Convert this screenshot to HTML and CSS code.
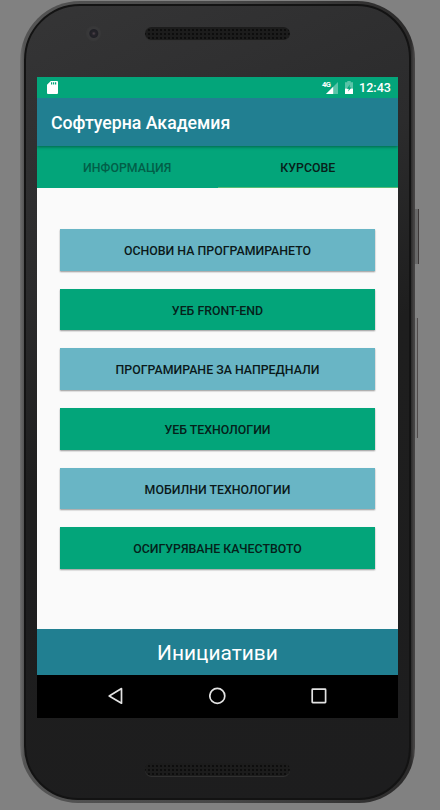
FILE: index.html
```html
<!DOCTYPE html>
<html lang="bg">
<head>
<meta charset="utf-8">
<title>Софтуерна Академия</title>
<link rel="stylesheet" href="styles.css">
</head>
<body>
<div class="device">
  <span class="side-key power"></span>
  <span class="side-key volume"></span>
  <div class="face">
    <div class="bezel-top">
      <span class="camera"></span>
      <span class="speaker"></span>
    </div>
    <main class="screen">
      <div class="status">
        <svg class="sd" width="11" height="13" viewBox="0 0 11 13"><path fill="#fff" fill-rule="evenodd" d="M3.8 0H10a1 1 0 0 1 1 1v11a1 1 0 0 1-1 1H1a1 1 0 0 1-1-1V3.8ZM4 1.3v2.2h1.2V1.3Zm2 0v2.2h1.2V1.3Zm2 0v2.2h1.2V1.3Z"/></svg>
        <div class="status-right">
          <span class="network">
            <svg width="12" height="12" viewBox="0 0 12 12"><path fill="#fff" fill-opacity=".35" d="M12 0v12H0Z"/><path fill="#fff" d="M7.2 4.8V12H0Z"/></svg>
            <span class="network-label">4G</span>
          </span>
          <svg class="battery" width="8" height="13" viewBox="0 0 8 13"><path fill="#fff" fill-opacity=".35" d="M2.3 0h3.4v1.3H8V7.5H0V1.3h2.3Z"/><path fill="#fff" d="M0 7.5h8V13H0Z"/><path fill="#03a57a" d="M5 3.4 1.8 7.8h2L3.2 10.6l3.2-4.2h-2Z"/></svg>
          <span class="clock">12:43</span>
        </div>
      </div>
      <header class="appbar"><h1>Софтуерна Академия</h1></header>
      <nav class="tabs">
        <div class="tab">ИНФОРМАЦИЯ</div>
        <div class="tab active">КУРСОВЕ</div>
      </nav>
      <section class="courses">
        <div class="course blue">ОСНОВИ НА ПРОГРАМИРАНЕТО</div>
        <div class="course green">УЕБ FRONT-END</div>
        <div class="course blue">ПРОГРАМИРАНЕ ЗА НАПРЕДНАЛИ</div>
        <div class="course green">УЕБ ТЕХНОЛОГИИ</div>
        <div class="course blue">МОБИЛНИ ТЕХНОЛОГИИ</div>
        <div class="course green">ОСИГУРЯВАНЕ КАЧЕСТВОТО</div>
      </section>
      <footer class="initiatives">Инициативи</footer>
      <div class="navbar">
        <svg width="18" height="18" viewBox="0 0 18 18"><path d="M14.5 1.6v14.6L2.2 8.9Z"/></svg>
        <svg width="18" height="18" viewBox="0 0 18 18"><circle cx="8.3" cy="8.9" r="7.5"/></svg>
        <svg width="18" height="18" viewBox="0 0 18 18"><rect x="2.2" y="2.2" width="13.4" height="13.4" rx=".5"/></svg>
      </div>
    </main>
    <div class="bezel-bottom"><span class="speaker"></span></div>
  </div>
</div>
</body>
</html>
```
FILE: styles.css
```css
* { box-sizing: border-box; }
body {
  margin: 0;
  width: 440px;
  height: 810px;
  overflow: hidden;
  background: #818181;
  font-family: Roboto, "Noto Sans", sans-serif;
  color: #fff;
}
.device {
  position: relative;
  width: 395px;
  height: 802px;
  margin: 1px 0 0 20px;
  padding: 3px 4px;
  border-radius: 60px 58px 56px 58px;
  background: linear-gradient(90deg, #707070 0, #545454 4px, #484848 50%, #2b2a2a 391px, #464444 394px);
}
.face {
  height: 796px;
  padding: 0 11px;
  border: 2px solid #131313;
  border-radius: 56px 54px 52px 54px;
  background: linear-gradient(155deg, #353536 0, #2b2b2c 30%, #1e1e1e 50%, #1d1d1e 100%);
}
.bezel-top {
  display: flex;
  height: 71px;
  padding: 20px 0 0 49px;
}
.camera {
  width: 15px;
  height: 15px;
  border-radius: 50%;
  background: radial-gradient(circle at 52% 50%, #51444c 0, #242329 2px, #202026 4px, #39393a 5px, #373738 7px);
}
.speaker {
  width: 145px;
  height: 13px;
  border-radius: 7px;
  background: radial-gradient(circle, #080808 0, #0b0b0b .6px, transparent 1.3px) 2px 1px / 4px 4px, #1c1c1c;
  box-shadow: 0 1px 0 #303030;
}
.bezel-top .speaker { margin: 1px 0 0 44px; }
.screen {
  width: 361px;
  height: 641px;
  background: #fafafa;
}
.status {
  display: flex;
  align-items: center;
  justify-content: space-between;
  height: 21px;
  padding: 0 7px 0 10px;
  background: #03a57a;
}
.status-right { display: flex; align-items: center; }
.network { position: relative; height: 12px; margin-right: 7px; }
.network svg { display: block; }
.network-label {
  position: absolute;
  left: -4px;
  top: -1px;
  font-size: 7.5px;
  line-height: 7px;
  font-weight: 700;
  letter-spacing: -.6px;
  background: #03a57a;
}
.battery { margin-right: 6px; }
.clock { font-size: 12.6px; font-weight: 500; line-height: 21px; }
.appbar {
  position: relative;
  display: flex;
  align-items: center;
  height: 48px;
  padding: 2px 0 0 14px;
  background: #217f91;
  box-shadow: 0 1px 3px rgba(0, 0, 0, .4);
  clip-path: inset(0 0 -5px 0);
}
h1 { margin: 0; font-size: 17.7px; font-weight: 500; white-space: nowrap; }
.tabs {
  display: flex;
  height: 42px;
  background: #03a57a;
  font-size: 12.35px;
  font-weight: 500;
}
.tab {
  flex: 1;
  padding-top: 1px;
  line-height: 43px;
  text-align: center;
  color: #025e48;
}
.tab.active { color: #082019; border-bottom: 1px solid #58bd75; }
.courses {
  display: flex;
  flex-direction: column;
  gap: 18.1px;
  height: 441px;
  padding: 41px 23px 0;
}
.course {
  height: 41.6px;
  line-height: 44px;
  text-align: center;
  font-size: 12.35px;
  font-weight: 500;
  color: #0b191a;
  white-space: nowrap;
  box-shadow: 0 1px 1.5px rgba(0, 0, 0, .4);
}
.blue { background: #69b5c5; }
.green { background: #03a57a; color: #05211a; }
.initiatives {
  height: 46px;
  line-height: 48px;
  text-align: center;
  font-size: 20.9px;
  background: #217f91;
}
.navbar {
  display: flex;
  align-items: center;
  justify-content: space-between;
  height: 43px;
  padding: 0 70px 2px;
  background: #000;
}
.navbar svg { fill: none; stroke: #e2e2e2; stroke-width: 1.7; stroke-linejoin: round; }
.bezel-bottom { display: flex; justify-content: center; padding-top: 45px; }
.side-key { position: absolute; }
.power { left: 395px; top: 208px; width: 4px; height: 55px; background: #686868; border-right: 1px solid #3d3838; }
.volume { left: 395px; top: 317px; width: 3px; height: 120px; background: #7c7c7c; border-right: 1px solid #504b4b; }
```
